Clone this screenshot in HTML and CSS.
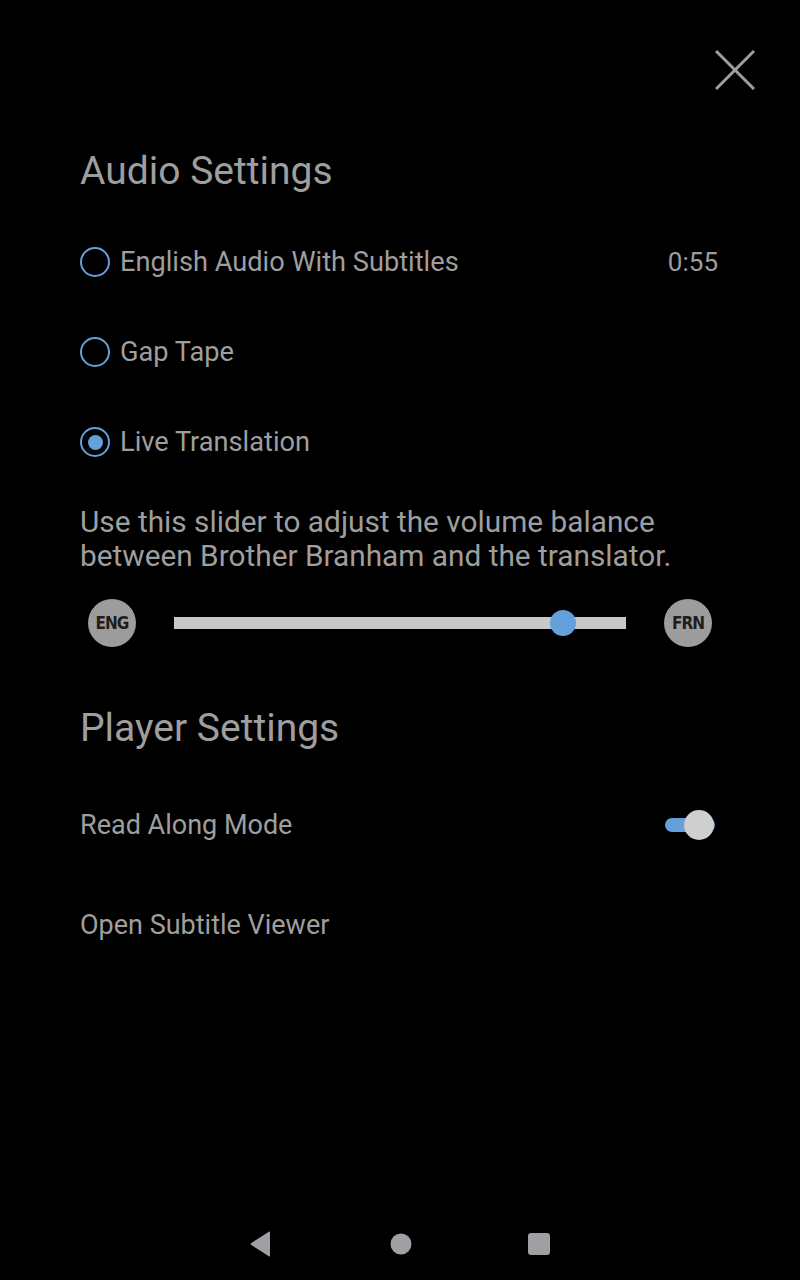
FILE: index.html
```html
<!DOCTYPE html>
<html lang="en">
  <head>
    <meta charset="UTF-8" />
    <meta name="viewport" content="width=device-width, initial-scale=1.0" />
    <title>Settings</title>
    <link rel="stylesheet" href="styles.css">
  </head>
  <body>
    <div class="topbar">
      <button class="close-button" aria-label="Close">
        <svg width="40" height="40" viewBox="0 0 40 40">
          <path d="M1 1 L39 39 M39 1 L1 39" stroke="#9e9e9e" stroke-width="3" fill="none" />
        </svg>
      </button>
    </div>

    <div class="content">
      <h2 class="section-title">Audio Settings</h2>

      <div class="radio-row">
        <span class="radio"></span>
        <span class="radio-label">English Audio With Subtitles</span>
        <span class="duration">0:55</span>
      </div>
      <div class="radio-row">
        <span class="radio"></span>
        <span class="radio-label">Gap Tape</span>
      </div>
      <div class="radio-row">
        <span class="radio checked"></span>
        <span class="radio-label">Live Translation</span>
      </div>

      <p class="hint">
        Use this slider to adjust the volume balance between Brother Branham
        and the translator.
      </p>

      <div class="balance">
        <span class="lang-badge">ENG</span>
        <div class="track">
          <span class="thumb" style="left: 86%"></span>
        </div>
        <span class="lang-badge">FRN</span>
      </div>

      <h2 class="section-title player-title">Player Settings</h2>

      <div class="setting-row">
        <span>Read Along Mode</span>
        <span class="toggle"><span class="toggle-thumb"></span></span>
      </div>
      <div class="setting-row">
        <span>Open Subtitle Viewer</span>
      </div>
    </div>

    <div class="navbar">
      <svg class="nav-icon back" width="24" height="26" viewBox="0 0 24 26">
        <path d="M21 1.5 L21 24.5 Q21 26 19.8 25.3 L2 13.8 Q1 13 2 12.2 L19.8 0.7 Q21 0 21 1.5 Z" fill="#a09fa3" />
      </svg>
      <svg class="nav-icon home" width="24" height="26" viewBox="0 0 24 26">
        <circle cx="12" cy="13" r="10.5" fill="#a09fa3" />
      </svg>
      <svg class="nav-icon recent" width="24" height="26" viewBox="0 0 24 26">
        <rect x="1" y="2" width="22" height="22" rx="3" fill="#a09fa3" />
      </svg>
    </div>
  </body>
</html>
```

FILE: styles.css
```css
body {
  margin: 0;
  min-height: 100vh;
  display: flex;
  flex-direction: column;
  background-color: #000;
  color: #9e9e9e;
  font-family: Roboto, "Noto Sans", sans-serif;
}

.topbar {
  display: flex;
  justify-content: flex-end;
  padding: 50px 45px 0 0;
}

.close-button {
  width: 40px;
  height: 40px;
  padding: 0;
  border: none;
  background: none;
  cursor: pointer;
}

.close-button svg {
  display: block;
}

.content {
  padding: 0 82px 0 80px;
}

.section-title {
  margin: 57px 0 0;
  font-size: 39px;
  font-weight: 400;
  line-height: 48px;
}

.player-title {
  margin-top: 57px;
}

.radio-row {
  display: flex;
  align-items: center;
  height: 90px;
  font-size: 27.2px;
}

.radio-row:first-of-type {
  margin-top: 22px;
}

.radio {
  box-sizing: border-box;
  width: 30px;
  height: 30px;
  margin-right: 10px;
  border: 2.5px solid #64a0dc;
  border-radius: 50%;
  display: flex;
  align-items: center;
  justify-content: center;
}

.radio.checked::after {
  content: "";
  width: 15px;
  height: 15px;
  border-radius: 50%;
  background-color: #64a0dc;
}

.duration {
  margin-left: auto;
  font-size: 26px;
}

.hint {
  margin: 18px 0 0;
  font-size: 29.8px;
  line-height: 34px;
}

.balance {
  display: flex;
  align-items: center;
  gap: 38px;
  height: 48px;
  margin: 26px 6px 0 8px;
}

.lang-badge {
  width: 48px;
  height: 48px;
  flex-shrink: 0;
  border-radius: 50%;
  background-color: #9c9c9c;
  color: #1e1e1e;
  font-family: "DejaVu Sans", sans-serif;
  font-stretch: condensed;
  font-weight: bold;
  font-size: 17px;
  letter-spacing: -1px;
  display: flex;
  align-items: center;
  justify-content: center;
}

.track {
  position: relative;
  flex: 1;
  height: 12px;
  background-color: #c8c8cc;
}

.thumb {
  position: absolute;
  top: -7px;
  width: 26px;
  height: 26px;
  margin-left: -13px;
  border-radius: 50%;
  background-color: #64a0dc;
}

.setting-row {
  display: flex;
  align-items: center;
  justify-content: space-between;
  height: 100px;
  font-size: 27px;
}

.player-title + .setting-row {
  margin-top: 23px;
}

.toggle {
  position: relative;
  width: 50px;
  height: 14px;
  margin-right: 3px;
  border-radius: 7px;
  background-color: #64a0dc;
}

.toggle-thumb {
  position: absolute;
  right: 1px;
  top: -8px;
  width: 30px;
  height: 30px;
  border-radius: 50%;
  background-color: #cfcfcf;
}

.navbar {
  margin-top: auto;
  height: 72px;
  display: flex;
  align-items: center;
  justify-content: center;
}

.nav-icon {
  display: block;
}

.home {
  margin: 0 114px 0 116px;
}
```
